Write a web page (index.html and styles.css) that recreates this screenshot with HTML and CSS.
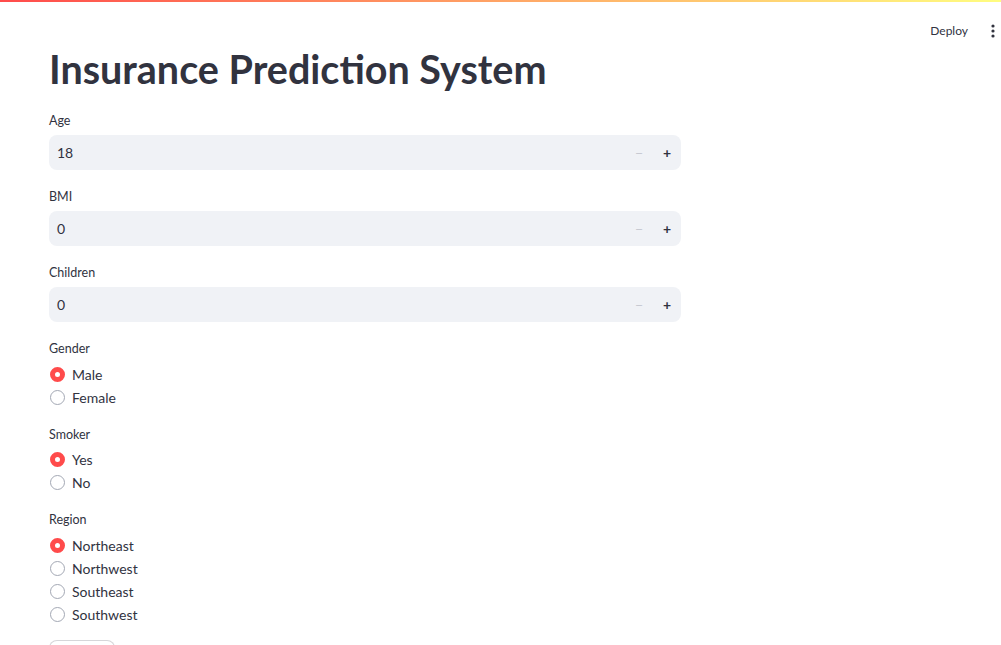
FILE: index.html
```html
<!DOCTYPE html>
<html lang="en">
<head>
<meta charset="utf-8">
<title>Insurance Prediction System</title>
<link rel="stylesheet" href="styles.css">
</head>
<body>
<div class="decoration"></div>
<header class="header">
  <span class="deploy">Deploy</span>
  <span class="kebab" aria-label="Main menu">
    <svg width="4" height="14" viewBox="0 0 4 14"><circle cx="2" cy="2" r="1.6" fill="#31333f"/><circle cx="2" cy="7" r="1.6" fill="#31333f"/><circle cx="2" cy="12" r="1.6" fill="#31333f"/></svg>
  </span>
</header>
<main class="main">
  <h1 class="title">Insurance Prediction System</h1>

  <div class="widget">
    <div class="label">Age</div>
    <div class="number-input">
      <span class="value">18</span>
      <span class="step minus">&minus;</span>
      <span class="step plus">+</span>
    </div>
  </div>

  <div class="widget">
    <div class="label">BMI</div>
    <div class="number-input">
      <span class="value">0</span>
      <span class="step minus">&minus;</span>
      <span class="step plus">+</span>
    </div>
  </div>

  <div class="widget">
    <div class="label">Children</div>
    <div class="number-input">
      <span class="value">0</span>
      <span class="step minus">&minus;</span>
      <span class="step plus">+</span>
    </div>
  </div>

  <div class="widget radio-group">
    <div class="label">Gender</div>
    <div class="option"><span class="dot checked"></span><span>Male</span></div>
    <div class="option"><span class="dot"></span><span>Female</span></div>
  </div>

  <div class="widget radio-group">
    <div class="label">Smoker</div>
    <div class="option"><span class="dot checked"></span><span>Yes</span></div>
    <div class="option"><span class="dot"></span><span>No</span></div>
  </div>

  <div class="widget radio-group">
    <div class="label">Region</div>
    <div class="option"><span class="dot checked"></span><span>Northeast</span></div>
    <div class="option"><span class="dot"></span><span>Northwest</span></div>
    <div class="option"><span class="dot"></span><span>Southeast</span></div>
    <div class="option"><span class="dot"></span><span>Southwest</span></div>
  </div>

  <button class="btn">Predict</button>
</main>
</body>
</html>
```

FILE: styles.css
```css
html, body {
  margin: 0;
  padding: 0;
  background: #ffffff;
  color: #31333f;
  font-family: "Lato", "Noto Sans", sans-serif;
  overflow: hidden;
  height: 645px;
}

.decoration {
  height: 2px;
  background: linear-gradient(90deg, #ff4b4b, #fffd80);
}

.header {
  height: 58px;
  display: flex;
  align-items: center;
  justify-content: flex-end;
  padding-right: 3px;
  gap: 20px;
}

.deploy {
  font-size: 12px;
  color: #31333f;
  margin-top: -1px;
}

.kebab {
  display: flex;
  width: 10px;
  justify-content: center;
}

.main {
  padding-left: 49px;
  width: 632px;
}

.title {
  margin: -17px 0 0 0;
  font-size: 39.5px;
  line-height: 52px;
  font-weight: 700;
  color: #31333f;
  letter-spacing: 0;
}

.widget {
  margin-top: 17px;
}

.widget + .widget {
  margin-top: 18px;
}

.label {
  font-size: 12.5px;
  line-height: 18px;
  margin-bottom: 5px;
}

.number-input {
  height: 35px;
  background: #f0f2f6;
  border-radius: 8px;
  display: flex;
  align-items: center;
  font-size: 14px;
}

.value {
  flex: 1;
  padding-left: 8px;
}

.step {
  width: 28px;
  text-align: center;
  font-size: 14px;
  font-weight: 700;
}

.minus {
  color: #c8cad2;
  font-weight: 400;
}

.plus {
  color: #31333f;
}

.radio-group .label {
  margin-bottom: 4.5px;
}

.radio-group + .radio-group {
  margin-top: 17px;
}

.option {
  display: flex;
  align-items: center;
  height: 23px;
  font-size: 14px;
}

.dot {
  box-sizing: border-box;
  width: 15px;
  height: 15px;
  border-radius: 50%;
  border: 1px solid #a3a8b4;
  margin-left: 1px;
  margin-right: 7px;
  background: #fff;
}

.dot.checked {
  border: 5px solid #ff4b4b;
  background: #fff;
}

.btn {
  margin-top: 14px;
  height: 38px;
  width: 66px;
  border: 1px solid rgba(49, 51, 63, 0.2);
  border-radius: 8px;
  background: #fff;
  color: #31333f;
  font-family: inherit;
  font-size: 14px;
}
```
